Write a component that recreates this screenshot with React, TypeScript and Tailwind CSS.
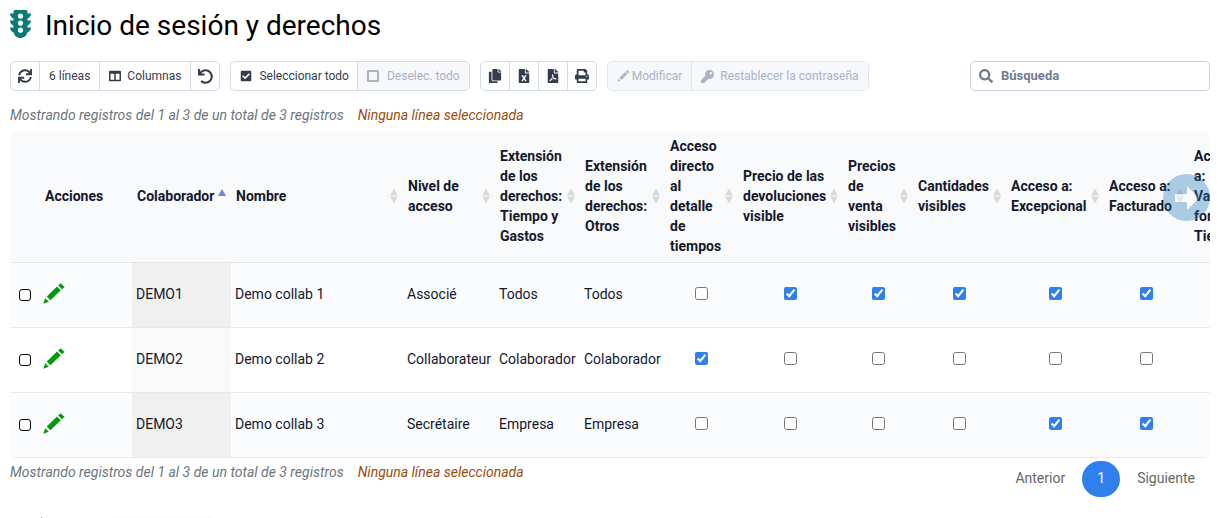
import { useState } from 'react';
import type { ReactNode } from 'react';
import {
  FaCheckSquare,
  FaColumns,
  FaCopy,
  FaFileExcel,
  FaFilePdf,
  FaKey,
  FaPrint,
  FaSearch,
  FaSync,
  FaTrafficLight,
  FaUndo,
} from 'react-icons/fa';

type Row = {
  id: string;
  name: string;
  level: string;
  timeScope: string;
  otherScope: string;
  rights: boolean[];
};

const rows: Row[] = [
  {
    id: 'DEMO1',
    name: 'Demo collab 1',
    level: 'Associé',
    timeScope: 'Todos',
    otherScope: 'Todos',
    rights: [false, true, true, true, true, true],
  },
  {
    id: 'DEMO2',
    name: 'Demo collab 2',
    level: 'Collaborateur',
    timeScope: 'Colaborador',
    otherScope: 'Colaborador',
    rights: [true, false, false, false, false, false],
  },
  {
    id: 'DEMO3',
    name: 'Demo collab 3',
    level: 'Secrétaire',
    timeScope: 'Empresa',
    otherScope: 'Empresa',
    rights: [false, false, false, false, true, true],
  },
];

const columns = [
  { label: 'Colaborador', width: 'w-[99px]' },
  { label: 'Nombre', width: '' },
  { label: 'Nivel de acceso', width: 'w-[92px]' },
  { label: 'Extensión de los derechos: Tiempo y Gastos', width: 'w-[85px]' },
  { label: 'Extensión de los derechos: Otros', width: 'w-[85px]' },
  { label: 'Acceso directo al detalle de tiempos', width: 'w-[73px]' },
  { label: 'Precio de las devoluciones visible', width: 'w-[105px]' },
  { label: 'Precios de venta visibles', width: 'w-[70px]' },
  { label: 'Cantidades visibles', width: 'w-[93px]' },
  { label: 'Acceso a: Excepcional', width: 'w-[98px]' },
  { label: 'Acceso a: Facturado', width: 'w-[85px]' },
];

function Pencil({ className }: { className: string }) {
  return (
    <svg className={className} viewBox="0 0 22 21" fill="currentColor" aria-hidden="true">
      <path d="M0.3 20.7 2.2 15.2 5.8 18.8Z" />
      <path d="M3.8 13.6 14 3.6 17.8 7.2 7.4 17.2Z" />
      <path d="M15.2 2.4 17.6 0.2 21.6 4 19 6.2Z" />
    </svg>
  );
}

function EmptySquare({ className }: { className: string }) {
  return (
    <svg className={className} viewBox="0 0 12 12" fill="none" stroke="currentColor" strokeWidth="2" aria-hidden="true">
      <rect x="1" y="1" width="10" height="10" rx="0.5" />
    </svg>
  );
}

function SortIcon({ active }: { active?: boolean }) {
  if (active) {
    return (
      <svg className="h-4 w-2" viewBox="0 0 8 16" aria-hidden="true">
        <path d="M4 1 8 8H0Z" fill="#7b83dc" />
      </svg>
    );
  }
  return (
    <svg className="h-4 w-2" viewBox="0 0 8 16" fill="#dadada" aria-hidden="true">
      <path d="M4 0.500 8 7.500H0Z" />
      <path d="M4 15.500 8 8.500H0Z" />
    </svg>
  );
}

function Group({ children }: { children: ReactNode }) {
  return (
    <div className="flex h-[30px] divide-x divide-[#d5dbe8] overflow-hidden rounded-[5px] border border-[#d5dbe8] has-[:disabled:first-child]:divide-[#e2e6ee] has-[:disabled:first-child]:border-[#e2e6ee]">
      {children}
    </div>
  );
}

type ToolButtonProps = { className: string; label?: string; disabled?: boolean; children: ReactNode };

function ToolButton({ className, label, disabled, children }: ToolButtonProps) {
  return (
    <button
      type="button"
      aria-label={label}
      disabled={disabled}
      className={`flex items-center justify-center whitespace-nowrap text-[12px] text-[#343d4d] disabled:bg-[#f6f8fc] disabled:text-[#aab3c2] ${className}`}
    >
      {children}
    </button>
  );
}

function TableInfo() {
  return (
    <p className="flex gap-[14px] text-[14px] leading-5 italic">
      <span className="text-[#6c757d]">Mostrando registros del 1 al 3 de un total de 3 registros</span>
      <span className="text-[#994d0b]">Ninguna línea seleccionada</span>
    </p>
  );
}

export default function App() {
  const [selected, setSelected] = useState<string[]>([]);

  const toggle = (id: string) =>
    setSelected((ids) => (ids.includes(id) ? ids.filter((i) => i !== id) : [...ids, id]));

  return (
    <main className="h-screen overflow-hidden bg-white px-[10px] font-[Roboto,sans-serif] text-[14px] text-[#14182a]">
      <h1 className="flex h-[51px] items-center gap-[14px] text-[28px] text-black">
        <FaTrafficLight className="mb-[3px] h-7 w-[21px] text-[#0b7a75]" />
        Inicio de sesión y derechos
      </h1>

      <div className="flex items-center gap-[10px] pt-[10px]">
        <Group>
          <ToolButton className="w-[29px]" label="Actualizar">
            <FaSync className="h-[14px] w-[14px]" />
          </ToolButton>
          <ToolButton className="px-[9px]">6 líneas</ToolButton>
          <ToolButton className="gap-[6px] px-[9px]">
            <FaColumns className="h-3 w-3" />
            Columnas
          </ToolButton>
          <ToolButton className="w-[28px]" label="Restaurar">
            <FaUndo className="h-[15px] w-[15px]" />
          </ToolButton>
        </Group>

        <Group>
          <ToolButton className="gap-[7px] pr-2 pl-[9px]">
            <FaCheckSquare className="h-3 w-3" />
            Seleccionar todo
          </ToolButton>
          <ToolButton className="gap-[8px] px-[9px]" disabled>
            <EmptySquare className="h-3 w-3" />
            Deselec. todo
          </ToolButton>
        </Group>

        <Group>
          <ToolButton className="w-[29px]" label="Copiar">
            <FaCopy className="h-[14px] w-[14px]" />
          </ToolButton>
          <ToolButton className="w-[29px]" label="Excel">
            <FaFileExcel className="h-[14px] w-[14px]" />
          </ToolButton>
          <ToolButton className="w-[29px]" label="PDF">
            <FaFilePdf className="h-[14px] w-[14px]" />
          </ToolButton>
          <ToolButton className="w-[28px]" label="Imprimir">
            <FaPrint className="h-[14px] w-[14px]" />
          </ToolButton>
        </Group>

        <Group>
          <ToolButton className="gap-[2px] px-[9px]" disabled>
            <Pencil className="h-3 w-[13px]" />
            Modificar
          </ToolButton>
          <ToolButton className="gap-[6px] px-[9px]" disabled>
            <FaKey className="h-[13px] w-[13px]" />
            Restablecer la contraseña
          </ToolButton>
        </Group>

        <label className="ml-auto flex h-[30px] w-60 items-center gap-2 rounded-[5px] border border-[#ccd5e6] px-2 text-[#717b90]">
          <FaSearch className="h-[14px] w-[14px] shrink-0" />
          <input
            type="search"
            aria-label="Búsqueda"
            placeholder="Búsqueda"
            className="w-full min-w-0 text-[13px] font-bold outline-none placeholder:text-[#717b90]"
          />
        </label>
      </div>

      <div className="pt-[14px] pb-[7px]">
        <TableInfo />
      </div>

      <div className="relative">
        <div className="overflow-hidden rounded-[6px]">
          <table className="w-full min-w-[1249px] table-fixed border-separate border-spacing-0">
            <colgroup>
              <col className="w-[30px]" />
              <col className="w-[92px]" />
              {columns.map((column) => (
                <col key={column.label} className={column.width} />
              ))}
              <col className="w-[70px]" />
            </colgroup>
            <thead>
              <tr className="bg-[#f8fafc] text-left leading-5">
                <th className="border-b border-[#e5e7eb]" />
                <th className="border-b border-[#e5e7eb] px-[5px] pt-1 pb-[6px] font-bold">Acciones</th>
                {columns.map((column, index) => (
                  <th key={column.label} className="border-b border-[#e5e7eb] px-[5px] pt-1 pb-[6px] font-bold">
                    <div className="flex items-center justify-between">
                      <span className="w-min min-w-0 flex-1">{column.label}</span>
                      <SortIcon active={index === 0} />
                    </div>
                  </th>
                ))}
                <th className="border-b border-[#e5e7eb] pt-1 pr-[15px] pb-[6px] pl-[5px] font-bold">
                  Acceso a: Validar formu. Tiempo
                </th>
              </tr>
            </thead>
            <tbody>
              {rows.map((row) => (
                <tr key={row.id} className="group h-[65px] odd:bg-[#fbfcfe]">
                  <td className="border-b border-[#e8eaed] pl-[9px]">
                    <input
                      type="checkbox"
                      aria-label={`Seleccionar ${row.id}`}
                      checked={selected.includes(row.id)}
                      onChange={() => toggle(row.id)}
                      className="block h-3 w-3 appearance-none rounded-[3px] border border-black bg-white checked:bg-black"
                    />
                  </td>
                  <td className="border-b border-[#e8eaed] pb-1 pl-[3px]">
                    <button type="button" aria-label={`Modificar ${row.id}`} className="block">
                      <Pencil className="h-[21px] w-[22px] text-[#009a0c]" />
                    </button>
                  </td>
                  <td className="border-b border-[#e8eaed] bg-[#fafafa] px-1 pb-[2px] group-odd:bg-[#f0f0f0]">{row.id}</td>
                  <td className="border-b border-[#e8eaed] px-1 pb-[2px]">{row.name}</td>
                  <td className="border-b border-[#e8eaed] px-1 pb-[2px]">{row.level}</td>
                  <td className="border-b border-[#e8eaed] px-1 pb-[2px]">{row.timeScope}</td>
                  <td className="border-b border-[#e8eaed] px-1 pb-[2px]">{row.otherScope}</td>
                  {row.rights.map((value, index) => (
                    <td key={index} className="border-b border-[#e8eaed] pb-1">
                      <input
                        type="checkbox"
                        aria-label={`${columns[index + 5].label} ${row.id}`}
                        defaultChecked={value}
                        className="mx-auto block h-[13px] w-[13px] accent-[#2f80ed]"
                      />
                    </td>
                  ))}
                  <td className="border-b border-[#e8eaed]" />
                </tr>
              ))}
            </tbody>
          </table>
        </div>

        <button
          type="button"
          aria-label="Desplazar a la derecha"
          className="absolute top-[42px] right-0 flex h-[47px] w-[47px] items-center justify-center rounded-full bg-[#1d73b8] opacity-35"
        >
          <svg className="h-6 w-6" viewBox="0 0 24 24" fill="#ffffff" aria-hidden="true">
            <path d="M0 8h12V1.500q0-1 1-.5L24 12 13 23q-1 .5-1-.5V16H0Z" />
          </svg>
        </button>
      </div>

      <div className="flex items-start justify-between pt-[3px]">
        <div className="pt-px">
          <TableInfo />
        </div>
        <nav className="flex text-[14px] text-[#666666]">
          <button type="button" className="pr-[17px] pb-[2px] pl-4">
            Anterior
          </button>
          <button type="button" className="h-9 w-[38px] rounded-full bg-[#2f80ed] pb-[2px] text-white">
            1
          </button>
          <button type="button" className="pr-[15px] pb-[2px] pl-[17px]">
            Siguiente
          </button>
        </nav>
      </div>

      {/* row preview that starts below the fold */}
      <div className="mt-5 flex h-[65px] items-start pl-[14px]">
        <div className="w-[89px]">
          <Pencil className="h-[21px] w-[22px] text-[#009a0c]" />
        </div>
        <div className="h-full w-[99px] bg-[#fafafa]" />
      </div>
    </main>
  );
}
